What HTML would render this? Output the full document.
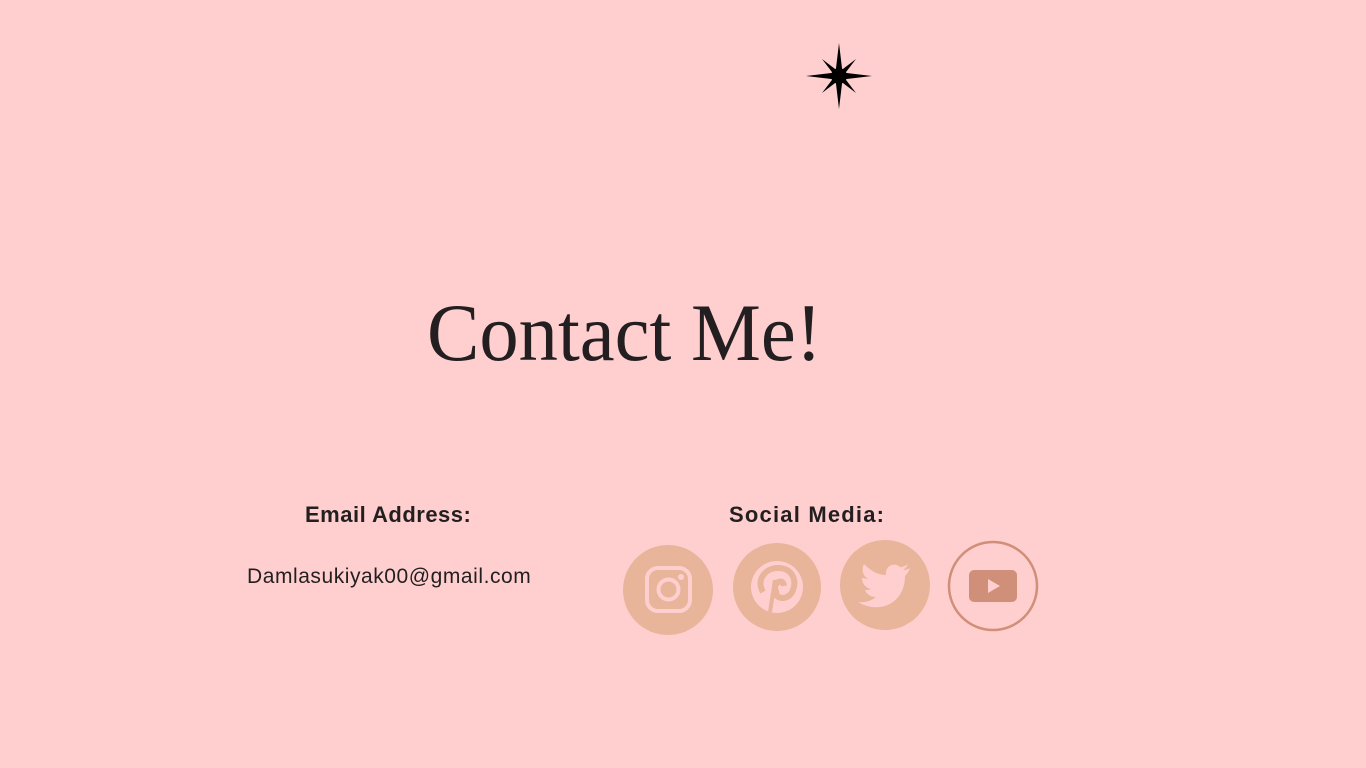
<!DOCTYPE html>
<html><head><style>
body{margin:0;width:1366px;height:768px;background:#ffcfcf;position:relative;overflow:hidden;font-family:"Liberation Sans",sans-serif;color:#231f20}
.t{position:absolute;white-space:nowrap}
</style></head><body>
<svg style="position:absolute;left:0;top:0" width="1366" height="768">
<path fill="#000" d="M839 43 L842.5 72.5 L872 76 L842.5 79.5 L839 109 L835.5 79.5 L806 76 L835.5 72.5 Z"/>
<path fill="#000" d="M856 59 L843 76 L856 93 L839 80 L822 93 L835 76 L822 59 L839 72 Z"/>
<circle cx="839" cy="76" r="8" fill="#000"/>
<circle cx="668" cy="590" r="45" fill="#e8b49a"/>
<rect x="647" y="568" width="43" height="43" rx="11" fill="none" stroke="#ffcfcf" stroke-width="4"/>
<circle cx="668.5" cy="589.5" r="10" fill="none" stroke="#ffcfcf" stroke-width="4"/>
<circle cx="681" cy="577" r="3" fill="#ffcfcf"/>
<circle cx="777" cy="587" r="44" fill="#e8b49a"/>
<circle cx="777" cy="587" r="26" fill="#ffcfcf"/>
<path d="M770 612 L775 580" stroke="#e8b49a" stroke-width="4" fill="none"/>
<path d="M763 592 C756 580 765 568 778 568 C792 568 797 580 793 590 C790 598 782 600 777 596 L775 588 C775 582 783 578 784 586" stroke="#e8b49a" stroke-width="6" fill="none"/>
<circle cx="885" cy="585" r="45" fill="#e8b49a"/>
<path fill="#ffcfcf" d="M910 568 C907 570 905 570 903 570 C906 568 907 566 908 564 C905 566 903 567 900 567 C895 562 885 565 886 575 C877 575 870 570 864 564 C861 570 863 576 868 579 C866 579 864 578 862 578 C862 584 866 588 871 589 C869 590 867 590 865 590 C867 595 871 597 876 597 C871 601 865 603 858 602 C880 615 905 603 905 576 C907 574 909 571 910 568Z"/>
<circle cx="993" cy="586" r="44" fill="none" stroke="#d08f78" stroke-width="2.5"/>
<rect x="969" y="570" width="48" height="32" rx="5" fill="#d08f78"/>
<path d="M988 579 L1000 586 L988 593Z" fill="#ffcfcf"/>
</svg>
<div class="t" style="left:427px;top:292px;font-family:'Liberation Serif',serif;font-size:82px;line-height:82px;transform:scaleX(0.958);transform-origin:left">Contact Me!</div>
<div class="t" style="left:305px;top:502px;font-size:22px;font-weight:bold;letter-spacing:0.5px">Email Address:</div>
<div class="t" style="left:729px;top:502px;font-size:22px;font-weight:bold;letter-spacing:1.2px">Social Media:</div>
<div class="t" style="left:247px;top:565px;font-size:21px;letter-spacing:0.55px">Damlasukiyak00@gmail.com</div>
</body></html>
